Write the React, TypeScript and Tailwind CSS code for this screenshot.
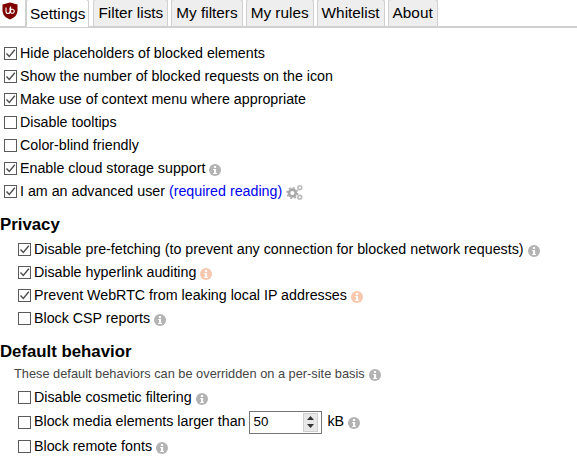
import React from 'react';

const Shield = () => (
  <svg width="16" height="18" viewBox="0 0 16 18">
    <path d="M8 .5 15.5 2.6V8.5C15.5 13 12 16 8 17.5 4 16 .5 13 .5 8.5V2.6Z" fill="#800000" />
    <path d="M4 5.5V9.5A2 2 0 0 0 8 9.5V5.5M8.6 4.5V11M8.6 8.2A2 2 0 1 1 8.6 10.4" stroke="#fff" strokeWidth="1.1" fill="none" />
  </svg>
);

const Check = ({ on }: { on?: boolean }) => (
  <span className="flex-none w-[13px] h-[13px] border border-[#5a5a5a] bg-white flex items-center justify-center">
    {on && (
      <svg width="11" height="11" viewBox="0 0 11 11">
        <path d="M1.5 5.5 4.3 8.5 9.8 1.8" stroke="#4d4d4d" strokeWidth="1.4" fill="none" />
      </svg>
    )}
  </span>
);

const Info = ({ warn }: { warn?: boolean }) => (
  <svg width="12" height="12" viewBox="0 0 12 12" className="flex-none ml-[4px] mt-[2px]">
    <circle cx="6" cy="6" r="6" fill={warn ? '#f7c7ae' : '#b3b3b3'} />
    <rect x="4.9" y="2" width="2.2" height="2" fill="#fff" />
    <path d="M4.2 5H7.1V9H8V10H4.2V9H5V6H4.2Z" fill="#fff" />
  </svg>
);

const Gears = () => (
  <svg width="17" height="17" viewBox="0 0 16 16" className="flex-none ml-[4px] mt-[2px]">
    <circle cx="6" cy="8.5" r="3.2" fill="none" stroke="#aaaaaa" strokeWidth="2.6" />
    <circle cx="6" cy="8.5" r="5" fill="none" stroke="#aaaaaa" strokeWidth="1.4" strokeDasharray="1.8 2.1" />
    <circle cx="13" cy="3.5" r="1.8" fill="none" stroke="#bbbbbb" strokeWidth="1.5" />
    <circle cx="13" cy="12.5" r="1.8" fill="none" stroke="#bbbbbb" strokeWidth="1.5" />
  </svg>
);

const Row = ({ on, tall, children }: { on?: boolean; tall?: boolean; children: React.ReactNode }) => (
  <div className={tall ? 'h-[26px] flex items-center' : 'h-[23px] flex items-center'}>
    <Check on={on} />
    <div className="ml-[3px] flex items-center whitespace-nowrap">{children}</div>
  </div>
);

const Tab = ({ label, active }: { label: string; active?: boolean }) => (
  <div
    className={
      active
        ? 'h-[28px] -mb-[2px] pl-[3px] pr-[3px] mr-px bg-white border border-b-0 border-[#d0d0d0] rounded-t-[3px] flex items-center'
        : 'h-[27px] px-[4px] bg-[#eeeeee] border border-b-0 border-[#d0d0d0] rounded-t-[3px] flex items-center'
    }
  >
    {label}
  </div>
);

export default function App() {
  return (
    <div className="w-[577px] h-[475px] overflow-hidden bg-white text-black text-[14.25px] font-['Liberation_Sans',Arial,sans-serif]">
      <div className="h-[28px] flex items-end border-b-2 border-[#d0d0d0] text-[15.35px]">
        <div className="w-[26px] h-[26px] border-r border-[#d0d0d0] pl-[2px] pt-[2px] flex-none">
          <Shield />
        </div>
        <div className="flex gap-[3px]">
          <Tab label="Settings" active />
          <Tab label="Filter lists" />
          <Tab label="My filters" />
          <Tab label="My rules" />
          <Tab label="Whitelist" />
          <Tab label="About" />
        </div>
      </div>

      <div className="pl-[4px] pt-[14px]">
        <Row on>Hide placeholders of blocked elements</Row>
        <Row on>Show the number of blocked requests on the icon</Row>
        <Row on>Make use of context menu where appropriate</Row>
        <Row>Disable tooltips</Row>
        <Row>Color-blind friendly</Row>
        <Row on>Enable cloud storage support<Info /></Row>
        <Row on>
          I am an advanced user&nbsp;<span className="text-[#0000ee]">(required reading)</span>
          <Gears />
        </Row>
      </div>

      <h2 className="mt-[10px] h-[25px] leading-[24px] text-[16.8px] font-bold">Privacy</h2>
      <div className="pl-[18px]">
        <Row on>
          Disable pre-fetching (to prevent any connection for blocked network requests)
          <Info />
        </Row>
        <Row on>Disable hyperlink auditing<Info warn /></Row>
        <Row on>Prevent WebRTC from leaking local IP addresses<Info warn /></Row>
        <Row>Block CSP reports<Info /></Row>
      </div>

      <h2 className="mt-[10px] h-[24px] leading-[24px] text-[16.8px] font-bold">Default behavior</h2>
      <div className="pl-[14px] h-[20px] mb-[2px] flex items-center text-[12.8px] text-[#444444]">
        These default behaviors can be overridden on a per-site basis
        <Info />
      </div>
      <div className="pl-[18px]">
        <Row>Disable cosmetic filtering<Info /></Row>
        <Row tall>
          Block media elements larger than
          <div className="ml-[4px] mr-[5px] w-[73px] h-[23px] border border-[#767676] pl-[3px] pr-[3px] flex items-center justify-between text-[13.33px]">
            50
            <div className="w-[15px] h-[19px] bg-[#e8e8e8] border border-[#d0d0d0] flex flex-col items-center justify-around">
              <svg width="7" height="4" viewBox="0 0 7 4"><path d="M3.5 0 7 4H0Z" fill="#333" /></svg>
              <svg width="7" height="4" viewBox="0 0 7 4"><path d="M0 0H7L3.5 4Z" fill="#333" /></svg>
            </div>
          </div>
          kB
          <Info />
        </Row>
        <Row>Block remote fonts<Info /></Row>
      </div>
    </div>
  );
}
